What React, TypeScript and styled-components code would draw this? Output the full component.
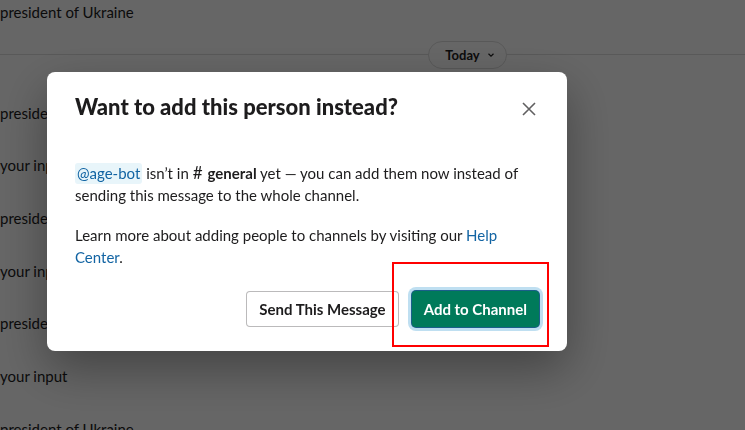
import React from "react";
import styled, { createGlobalStyle } from "styled-components";

const Global = createGlobalStyle`
  html, body { margin: 0; padding: 0; background: #ffffff; overflow: hidden; }
  body { font-family: Lato, "Noto Sans", sans-serif; color: #1d1c1d; width: 745px; height: 430px; }
  * { box-sizing: border-box; }
`;

const Page = styled.div`
  width: 745px;
  height: 430px;
  overflow: hidden;
`;

const Feed = styled.div`
  display: flex;
  flex-direction: column;
  margin-top: -14.5px;
`;

const MessageRow = styled.div`
  height: 52.7px;
  display: flex;
  align-items: center;
  font-size: 15px;
  line-height: 22px;
  color: #1d1c1d;
  white-space: nowrap;
`;

const DateDivider = styled.div`
  height: 48px;
  display: flex;
  justify-content: center;
  align-items: flex-start;
  padding: 2.5px 0 0 190px;
  background: linear-gradient(to bottom, transparent 16px, #dedede 16px, #dedede 17px, transparent 17px);
`;

const DatePill = styled.div`
  height: 28px;
  display: flex;
  align-items: center;
  gap: 7px;
  padding: 0 11px 0 16px;
  border: 1px solid #dddddd;
  border-radius: 24px;
  background: #ffffff;
  font-size: 13px;
  font-weight: 700;
  color: #1d1c1d;
`;

const Overlay = styled.div`
  position: fixed;
  inset: 0;
  background: rgba(0, 0, 0, 0.6);
  padding: 72px 0 0 47px;
`;

const Modal = styled.div`
  width: 520px;
  background: #ffffff;
  border-radius: 8px;
  box-shadow: 0 18px 48px rgba(0, 0, 0, 0.35);
  display: flex;
  flex-direction: column;
`;

const Header = styled.div`
  height: 70px;
  display: flex;
  align-items: center;
  justify-content: space-between;
  padding: 0 20px 0 28px;
`;

const Title = styled.h1`
  margin: 0;
  font-size: 22px;
  line-height: 30px;
  font-weight: 900;
  color: #1d1c1d;
`;

const CloseButton = styled.button`
  width: 36px;
  height: 36px;
  display: flex;
  align-items: center;
  justify-content: center;
  border: none;
  background: transparent;
  padding: 0;
  margin-top: 4px;
`;

const Body = styled.div`
  padding: 20px 28px 0 28px;
  font-size: 15px;
  line-height: 22px;
  color: #1d1c1d;
`;

const Para = styled.p<{ $gap?: number }>`
  margin: 0 0 ${(p) => p.$gap ?? 0}px 0;
`;

const Mention = styled.span`
  color: #1264a3;
  background: #e8f5fa;
  border-radius: 3px;
  padding: 1px 2px 2px;
`;

const Hash = styled.span`
  font-size: 17px;
  font-weight: 400;
  margin: 0 5px 0 0;
`;

const Strong = styled.b`
  font-weight: 700;
`;

const Link = styled.a`
  color: #1264a3;
  text-decoration: none;
`;

const Footer = styled.div`
  display: flex;
  justify-content: flex-end;
  gap: 13px;
  padding: 23px 28px 24px 28px;
`;

const Button = styled.button<{ $primary?: boolean }>`
  height: 36px;
  padding: 0 12px;
  border-radius: 4px;
  font-family: Lato, "Noto Sans", sans-serif;
  font-size: 15px;
  font-weight: 700;
  border: ${(p) => (p.$primary ? "none" : "1px solid rgba(29, 28, 29, 0.3)")};
  background: ${(p) => (p.$primary ? "#007a5a" : "#ffffff")};
  color: ${(p) => (p.$primary ? "#ffffff" : "#1d1c1d")};
  box-shadow: ${(p) =>
    p.$primary ? "0 0 0 1px #1b5f8a, 0 0 0 4px #bfdff1" : "none"};
`;

const Annotation = styled.div`
  position: fixed;
  left: 392px;
  top: 262px;
  width: 157px;
  height: 85px;
  border: 2px solid #ff0000;
  pointer-events: none;
`;

const lines = [
  "president of Ukraine",
  "president of Ukraine",
  "your input",
  "president of Ukraine",
  "your input",
  "president of Ukraine",
  "your input",
  "president of Ukraine",
];

export default function App() {
  return (
    <Page>
      <Global />
      <Feed>
        <MessageRow>{lines[0]}</MessageRow>
        <DateDivider>
          <DatePill>
            Today
            <svg width="8" height="6" viewBox="0 0 8 6">
              <path d="M1.5 1.8 L4 4.2 L6.5 1.8" fill="none" stroke="#1d1c1d" strokeWidth="1.2" />
            </svg>
          </DatePill>
        </DateDivider>
        {lines.slice(1).map((t, i) => (
          <MessageRow key={i}>{t}</MessageRow>
        ))}
      </Feed>
      <Overlay>
        <Modal>
          <Header>
            <Title>Want to add this person instead?</Title>
            <CloseButton aria-label="Close">
              <svg width="16" height="16" viewBox="0 0 16 16">
                <path d="M2 2 L14 14 M14 2 L2 14" stroke="#616061" strokeWidth="1.6" fill="none" />
              </svg>
            </CloseButton>
          </Header>
          <Body>
            <Para $gap={18}>
              <Mention>@age-bot</Mention> isn’t in <Hash>#</Hash>
              <Strong>general</Strong> yet — you can add them now instead of sending this
              message to the whole channel.
            </Para>
            <Para>
              Learn more about adding people to channels by visiting our{" "}
              <Link>Help Center</Link>.
            </Para>
          </Body>
          <Footer>
            <Button>Send This Message</Button>
            <Button $primary>Add to Channel</Button>
          </Footer>
        </Modal>
      </Overlay>
      <Annotation />
    </Page>
  );
}
